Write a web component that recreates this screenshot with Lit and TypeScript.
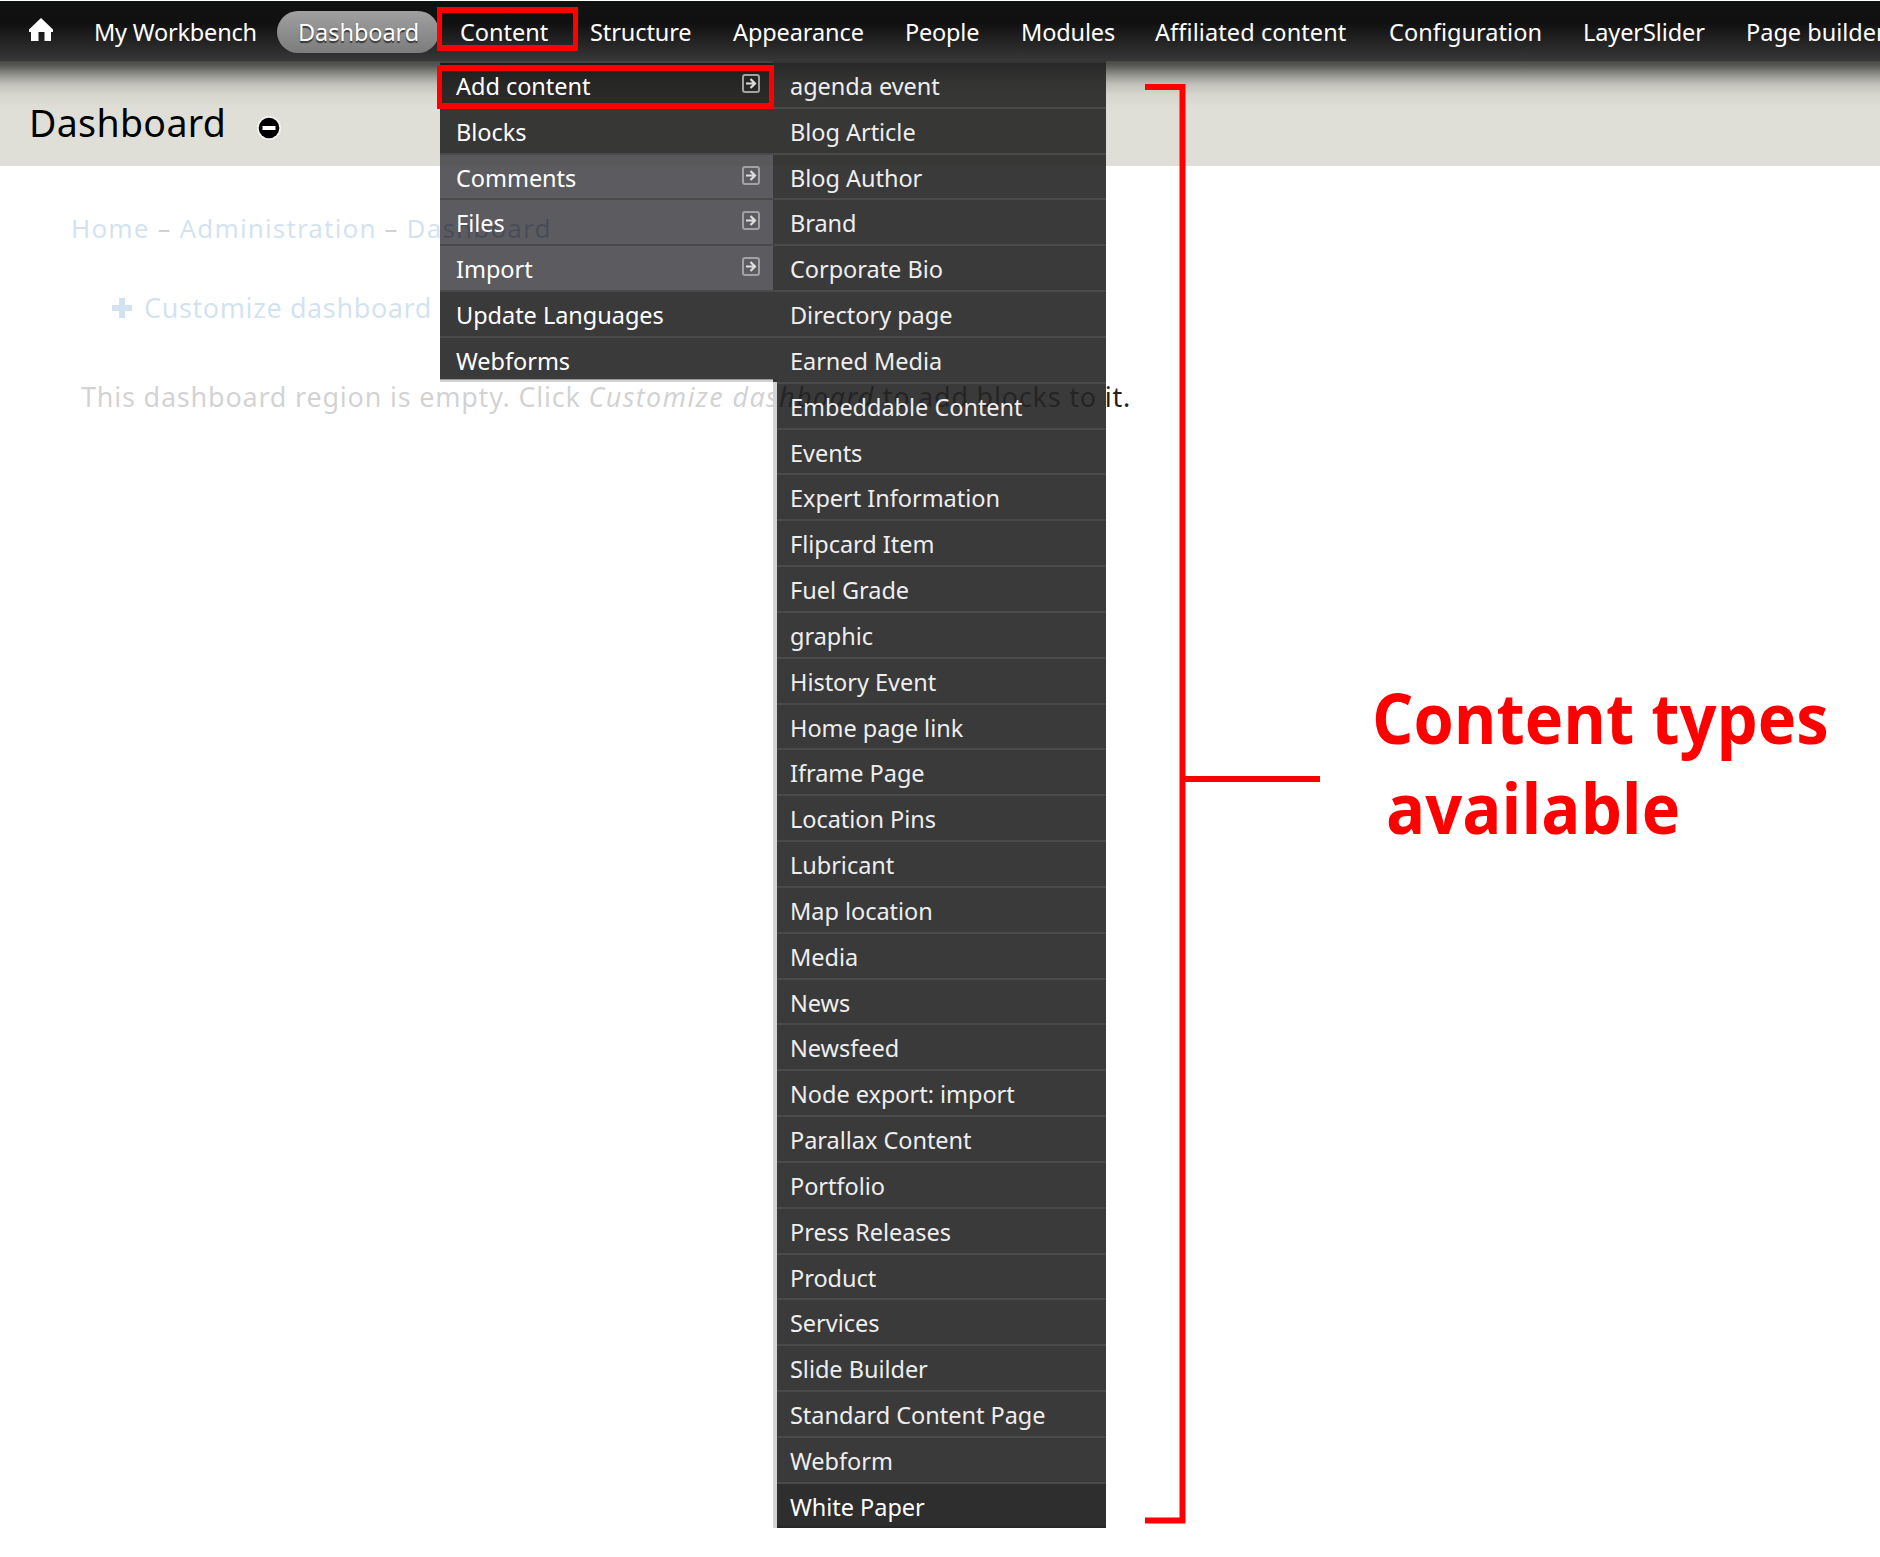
import { LitElement, html, css, svg } from "lit";
import { customElement } from "lit/decorators.js";
import { classMap } from "lit/directives/class-map.js";

// label, width of the text, letter spacing
const NAV: [string, number, number][] = [
  ["My Workbench", 162, -0.2], ["Dashboard", 120, -0.05], ["Content", 88, 0], ["Structure", 101, -0.1],
  ["Appearance", 130, -0.1], ["People", 74, -0.2], ["Modules", 92, -0.15], ["Affiliated content", 192, 0.1],
  ["Configuration", 152, 0.05], ["LayerSlider", 121, -0.1], ["Page builder", 136, 0],
];

const MENU = [
  { label: "Add content", arrow: true, kind: "active" },
  { label: "Blocks", arrow: false, kind: "" },
  { label: "Comments", arrow: true, kind: "pale" },
  { label: "Files", arrow: true, kind: "pale" },
  { label: "Import", arrow: true, kind: "pale" },
  { label: "Update Languages", arrow: false, kind: "" },
  { label: "Webforms", arrow: false, kind: "end" },
];

const TYPES = [
  "agenda event", "Blog Article", "Blog Author", "Brand", "Corporate Bio", "Directory page",
  "Earned Media", "Embeddable Content", "Events", "Expert Information", "Flipcard Item",
  "Fuel Grade", "graphic", "History Event", "Home page link", "Iframe Page", "Location Pins",
  "Lubricant", "Map location", "Media", "News", "Newsfeed", "Node export: import",
  "Parallax Content", "Portfolio", "Press Releases", "Product", "Services", "Slide Builder",
  "Standard Content Page", "Webform", "White Paper",
];

@customElement("app-root")
export class AppRoot extends LitElement {
  static styles = css`
    :host { display: block; position: relative; width: 1880px; height: 1557px; overflow: hidden;
      background: #fff; font-family: "Noto Sans", "Open Sans", sans-serif; color: #000; }
    * { box-sizing: border-box; }
    .bar { position: relative; z-index: 3; margin-top: 1px; height: 60px; display: flex; align-items: flex-start;
      background: linear-gradient(#101211 0, #101010 36%, #373737 100%); color: #fff; overflow: hidden; }
    .home { flex: none; width: 73px; height: 60px; padding: 17px 0 0 29px; }
    .home svg { display: block; }
    .tab { flex: none; margin-top: 10px; height: 42px; padding: 0 21px; line-height: 42px; border-radius: 21px;
      font-size: 23.5px; white-space: nowrap; box-sizing: content-box; }
    .tab.on { background: linear-gradient(#a0a0a0, #7c7c7c); text-shadow: 0 2px 1px #333; }
    .head { position: relative; height: 105px; background: #dfdfd7; display: flex; align-items: center; padding: 18px 0 0 29px; }
    .shade { position: absolute; inset: 0 0 auto 0; height: 48px;
      background: linear-gradient(rgba(0,0,0,.68) 0, rgba(0,0,0,.6) 10%, rgba(0,0,0,.33) 30%, rgba(0,0,0,.14) 48%, rgba(0,0,0,.04) 70%, rgba(0,0,0,0) 100%); }
    .title { position: relative; margin: 0; font-weight: 400; font-size: 37.5px; line-height: 50px; width: 227px; letter-spacing: .35px; }
    .minus { position: relative; margin-top: 10px; display: block; }
    .crumb { margin: 42px 0 0 71px; height: 40px; line-height: 40px; font-size: 26px; letter-spacing: 1.15px; white-space: nowrap; color: #222; }
    .link { color: #1f70b8; }
    .custom { margin: 40px 0 0 112px; height: 40px; line-height: 40px; font-size: 27px; letter-spacing: .6px; color: #1f70b8; display: flex; align-items: center; gap: 12px; white-space: nowrap; }
    .empty { margin: 49px 0 0 81px; height: 40px; line-height: 40px; font-size: 27px; letter-spacing: .78px; white-space: nowrap; color: #222; }
    .empty em { letter-spacing: 1.35px; }
    .veil { position: absolute; left: 0; top: 166px; width: 777px; height: 1391px; background: rgba(255,255,255,.8);
      clip-path: polygon(0 0, 440px 0, 440px 216px, 777px 216px, 777px 100%, 0 100%); }
    .menus { position: absolute; left: 440px; top: 61px; display: flex; align-items: flex-start; font-size: 23.5px; color: #fff; }
    .menu { width: 333px; border-top: 2px solid #444; }
    .under { height: 3px; background: #d3d3d3; border-top: 1px solid #999; width: 337px; }
    .sub { width: 333px; padding-top: 2px; position: relative; background: linear-gradient(#343434, #343434) 0 0 / 100% 2px no-repeat; color: #eee; }
    .row { height: 45.84px; display: flex; justify-content: space-between; padding: 0 13px 0 16px; line-height: 46px;
      background: rgba(37,37,37,.9); border-bottom: 2px solid #4a4a4a; white-space: nowrap; letter-spacing: -.03px; }
    .sub .row { padding-left: 17px; }
    .row svg { margin-top: 11px; flex: none; }
    .row.active { background: rgba(22,22,22,.9); }
    .row.pale { background: rgba(74,73,78,.9); }
    .row.end { height: 41px; border-bottom: 0; }
    .row.last { height: 44px; background: #2e2e2e; border-bottom-color: #262626; color: #fff; }
    .strip { position: absolute; left: 0; top: 321px; bottom: 0; width: 4px; background: #d3d3d3; }
    .box { position: absolute; border: 6px solid #f00; border-width: 6px 5px; z-index: 4; }
    .b1 { left: 437px; top: 7px; width: 141px; height: 44px; }
    .b2 { left: 437px; top: 65px; width: 337px; height: 44px; }
    .bracket { position: absolute; left: 1145px; top: 84px; z-index: 4; }
    .note { position: absolute; left: 1372px; top: 672px; margin: 0; color: #f00; font: 700 70px/90px "Open Sans", sans-serif; white-space: nowrap; transform-origin: 0 0; transform: scaleX(.93); }
    .second { padding-left: 15px; }
  `;

  private arrow() {
    return svg`<svg width="18" height="19" viewBox="0 0 18 19"><rect x="1" y="1" width="16" height="17" rx="2" fill="none" stroke="#a2a2a2" stroke-width="2"/><path d="M4 9.500h8.500M8.500 5l4.500 4.500-4.500 4.500" fill="none" stroke="#ddd" stroke-width="2.200"/></svg>`;
  }

  render() {
    return html`
      <nav class="bar">
        <div class="home"><svg width="24" height="24" viewBox="0 0 24 24"><path d="M12 0 24 11.500v2.500h-2V23h-6.500v-9h-6v9H2V14H0V11.500z" fill="#fff"/></svg></div>
        ${NAV.map(([t, w, s], i) => html`<div class=${classMap({ tab: true, on: i === 1 })} style="width:${w}px;letter-spacing:${s}px">${t}</div>`)}
      </nav>
      <header class="head">
        <div class="shade"></div>
        <h1 class="title">Dashboard</h1>
        <svg class="minus" width="26" height="26" viewBox="0 0 26 26"><circle cx="13" cy="13" r="12" fill="#f4f4f0"/><circle cx="13" cy="13" r="10.300" fill="#000"/><rect x="6.500" y="11" width="13" height="4" fill="#fff"/></svg>
      </header>
      <div class="crumb"><span class="link">Home</span> – <span class="link">Administration</span> – <span class="link">Dashboard</span></div>
      <div class="custom"><svg width="20" height="20" viewBox="0 0 20 20"><path d="M7 0h6v7h7v6h-7v7H7v-7H0V7h7z" fill="#1f70b8"/></svg><span>Customize dashboard</span></div>
      <div class="empty">This dashboard region is empty. Click <em>Customize dashboard</em> to add blocks to it.</div>
      <div class="veil"></div>
      <div class="menus">
        <div class="menu">
          ${MENU.map((m) => html`<div class="row ${m.kind}"><span>${m.label}</span>${m.arrow ? this.arrow() : ""}</div>`)}
          <div class="under"></div>
        </div>
        <div class="sub">
          ${TYPES.map((t, i) => html`<div class=${classMap({ row: true, last: i === TYPES.length - 1 })}><span>${t}</span></div>`)}
          <div class="strip"></div>
        </div>
      </div>
      <div class="box b1"></div>
      <div class="box b2"></div>
      <svg class="bracket" width="176" height="1440" viewBox="0 0 176 1440"><path d="M0 3H37.500V1436.500H0M37.500 695H175" fill="none" stroke="#f00" stroke-width="6"/></svg>
      <p class="note">Content types<br /><span class="second">available</span></p>
    `;
  }
}
